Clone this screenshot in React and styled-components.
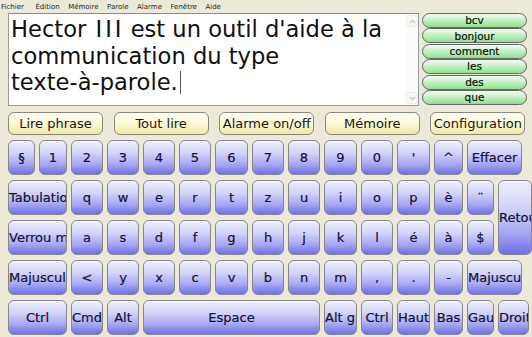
import React from "react";
import styled, { createGlobalStyle } from "styled-components";

const Global = createGlobalStyle`
  html, body { margin: 0; padding: 0; }
  body {
    background: #ece9d8;
    width: 532px;
    height: 337px;
    overflow: hidden;
    font-family: "DejaVu Sans", Verdana, sans-serif;
  }
`;

const Page = styled.div`
  width: 532px;
  height: 337px;
  overflow: hidden;
  background: #ece9d8;
  display: flex;
  flex-direction: column;
`;

const MenuBar = styled.div`
  height: 13px;
  display: flex;
  align-items: center;
  gap: 8.5px;
  padding-left: 1px;
  font-family: "DejaVu Sans", Verdana, sans-serif;
  font-size: 7px;
  color: #1e1e1e;
`;

const MenuItem = styled.span`
  white-space: nowrap;
  margin-right: ${(p) => (p.$first ? "3px" : "0")};
`;

const TopArea = styled.div`
  display: flex;
  align-items: flex-start;
  padding-left: 8px;
  height: 93px;
`;

const TextBox = styled.div`
  box-sizing: border-box;
  width: 411px;
  height: 93px;
  background: #fff;
  border: 1px solid #9a9a9a;
  border-top-color: #8a8a8a;
  display: flex;
`;

const TextContent = styled.div`
  flex: 1;
  padding: 2px 0 0 2px;
  font-family: "DejaVu Sans", Verdana, sans-serif;
  font-size: 22.6px;
  line-height: 26.5px;
  color: #101010;
  white-space: nowrap;
  overflow: hidden;
`;

const Roman = styled.span`
  letter-spacing: 3px;
  margin-left: 2px;
  margin-right: -1px;
`;

const Caret = styled.span`
  display: inline-block;
  width: 1px;
  height: 23px;
  background: #555;
  margin-left: 2px;
  vertical-align: -4px;
`;

const ScrollBar = styled.div`
  width: 12px;
  display: flex;
  flex-direction: column;
  justify-content: space-between;
  padding: 1px 0;
  background: #fbfbf9;
`;

const ScrollArrow = styled.div`
  width: 12px;
  height: 12px;
  box-sizing: border-box;
  border: 1px solid #eeeeea;
  border-radius: 2px;
  background: #f7f7f3;
  display: flex;
  align-items: center;
  justify-content: center;
`;

const WordList = styled.div`
  margin-left: 3px;
  width: 105px;
  height: 92px;
  display: flex;
  flex-direction: column;
  justify-content: space-between;
`;

const WordButton = styled.div`
  box-sizing: border-box;
  height: 15px;
  border: 1px solid #666;
  border-radius: 8px;
  background: linear-gradient(to bottom, #f2fdf2 0%, #c6f1c6 45%, #92df92 100%);
  display: flex;
  align-items: center;
  justify-content: center;
  font-size: 10.5px;
  color: #0c160c;
  line-height: 1;
  -webkit-text-stroke: 0.2px #0c160c;
`;

const FunctionRow = styled.div`
  margin-top: 6px;
  padding-left: 8px;
  display: flex;
  gap: 10.6px;
  height: 23px;
`;

const FunctionButton = styled.div`
  box-sizing: border-box;
  width: 95px;
  height: 23px;
  border: 1px solid #8a8a7c;
  border-radius: 6px;
  background: linear-gradient(to bottom, #fffef4 0%, #fbf7d2 55%, #f0e8a2 100%);
  display: flex;
  align-items: center;
  justify-content: center;
  font-size: 13px;
  color: #151515;
  white-space: nowrap;
`;

const Keyboard = styled.div`
  margin-top: 5px;
  padding-left: 8px;
  display: grid;
  grid-template-columns: 27px 28px 32px 32px 32px 32px 33px 32px 32px 33px 32px 33px 29px 27px 31px;
  grid-template-rows: repeat(5, 35px);
  column-gap: 4px;
  row-gap: 5px;
`;

const Key = styled.div`
  box-sizing: border-box;
  grid-column: ${(p) => p.$col} / span ${(p) => p.$span || 1};
  grid-row: ${(p) => p.$row} / span ${(p) => p.$rows || 1};
  width: ${(p) => (p.$w ? `${p.$w}px` : "auto")};
  border: 1px solid #878787;
  border-radius: 6px;
  background: linear-gradient(to bottom, #efeffd 0%, #d4d4f9 35%, #a8a8f2 70%, #6f6fe9 100%);
  box-shadow: inset 0 1px 0 rgba(255, 255, 255, 0.7);
  font-size: 13px;
  color: #121234;
  -webkit-text-stroke: 0.2px #121234;
  white-space: nowrap;
  overflow: hidden;
  text-align: center;
  line-height: ${(p) => (p.$rows ? 35 * p.$rows + 5 * (p.$rows - 1) - 2 : 33)}px;
  padding: 0;
`;

const rows = [
  [
    ["§", 1], ["1", 2], ["2", 3], ["3", 4], ["4", 5], ["5", 6], ["6", 7], ["7", 8],
    ["8", 9], ["9", 10], ["0", 11], ["'", 12], ["^", 13], ["Effacer", 14, 2, 55],
  ],
  [
    ["Tabulation", 1, 2], ["q", 3], ["w", 4], ["e", 5], ["r", 6], ["t", 7], ["z", 8],
    ["u", 9], ["i", 10], ["o", 11], ["p", 12], ["è", 13], ["¨", 14],
  ],
  [
    ["Verrou maj", 1, 2], ["a", 3], ["s", 4], ["d", 5], ["f", 6], ["g", 7], ["h", 8],
    ["j", 9], ["k", 10], ["l", 11], ["é", 12], ["à", 13], ["$", 14],
  ],
  [
    ["Majuscule", 1, 2], ["<", 3], ["y", 4], ["x", 5], ["c", 6], ["v", 7], ["b", 8],
    ["n", 9], ["m", 10], [",", 11], [".", 12], ["-", 13], ["Majuscule", 14, 2, 55],
  ],
  [
    ["Ctrl", 1, 2], ["Cmd", 3], ["Alt", 4], ["Espace", 5, 5], ["Alt gr", 10],
    ["Ctrl", 11], ["Haut", 12], ["Bas", 13], ["Gauche", 14], ["Droite", 15],
  ],
];

const menus = ["Fichier", "Édition", "Mémoire", "Parole", "Alarme", "Fenêtre", "Aide"];
const words = ["bcv", "bonjour", "comment", "les", "des", "que"];
const functions = ["Lire phrase", "Tout lire", "Alarme on/off", "Mémoire", "Configuration"];

const Chevron = ({ up }) => (
  <svg width="7" height="5" viewBox="0 0 7 5">
    <path
      d={up ? "M1 4 L3.5 1.5 L6 4" : "M1 1 L3.5 3.5 L6 1"}
      fill="none"
      stroke="#c8c8c4"
      strokeWidth="1.3"
    />
  </svg>
);

export default function App() {
  return (
    <Page>
      <Global />
      <MenuBar>
        {menus.map((m, i) => (
          <MenuItem key={m} $first={i === 0}>
            {m}
          </MenuItem>
        ))}
      </MenuBar>
      <TopArea>
        <TextBox>
          <TextContent>
            Hector <Roman>III</Roman> est un outil d'aide à la
            <br />
            communication du type
            <br />
            texte-à-parole.<Caret />
          </TextContent>
          <ScrollBar>
            <ScrollArrow>
              <Chevron up />
            </ScrollArrow>
            <ScrollArrow>
              <Chevron />
            </ScrollArrow>
          </ScrollBar>
        </TextBox>
        <WordList>
          {words.map((w) => (
            <WordButton key={w}>{w}</WordButton>
          ))}
        </WordList>
      </TopArea>
      <FunctionRow>
        {functions.map((f) => (
          <FunctionButton key={f}>{f}</FunctionButton>
        ))}
      </FunctionRow>
      <Keyboard>
        {rows.map((row, ri) =>
          row.map(([label, col, span, w]) => (
            <Key key={`${ri}-${col}`} $row={ri + 1} $col={col} $span={span} $w={w}>
              {label}
            </Key>
          ))
        )}
        <Key $row={2} $col={15} $rows={2} $w={34}>
          Retour
        </Key>
      </Keyboard>
    </Page>
  );
}
